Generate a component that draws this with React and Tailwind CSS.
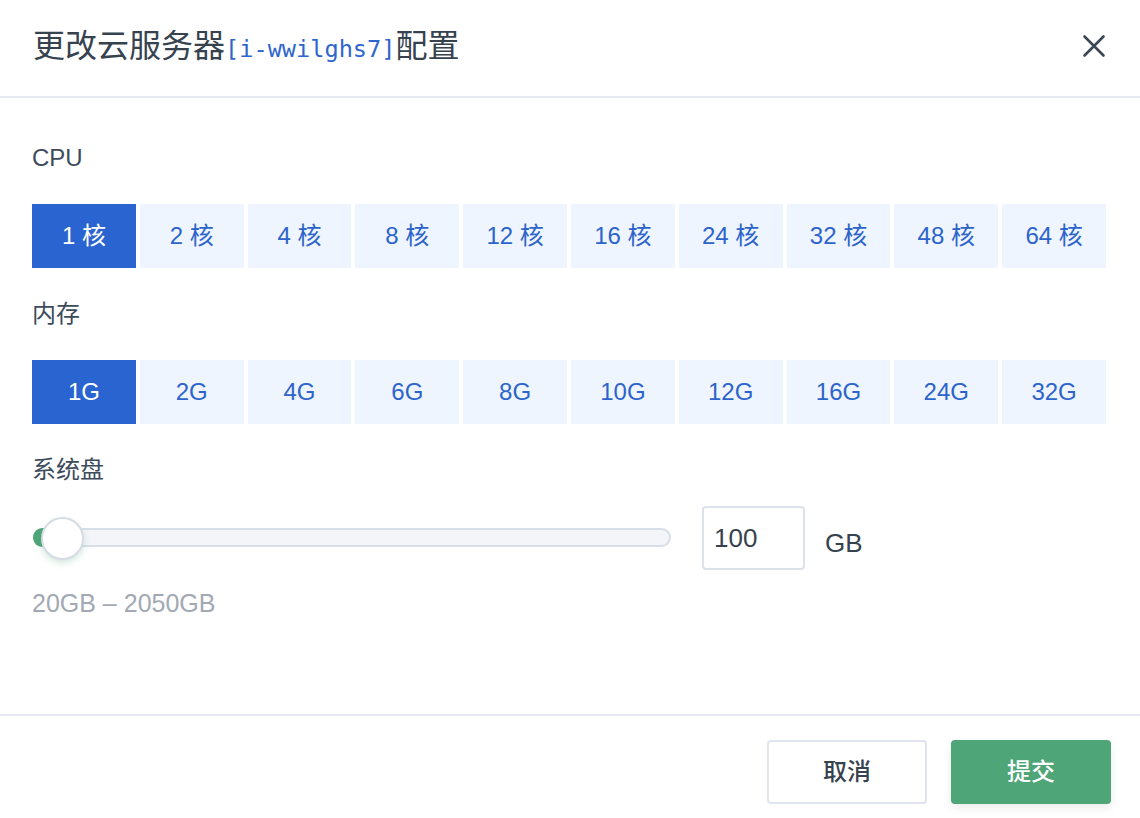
import { useState } from "react";

const cpuOptions = [1, 2, 4, 8, 12, 16, 24, 32, 48, 64];
const memOptions = ["1G", "2G", "4G", "6G", "8G", "10G", "12G", "16G", "24G", "32G"];

const font = "font-['Liberation_Sans','Noto_Sans_CJK_SC',sans-serif]";

function OptionRow({ options, value, onChange, render }) {
  return (
    <div className="flex gap-1">
      {options.map((opt) => (
        <button
          key={opt}
          type="button"
          onClick={() => onChange(opt)}
          className={`flex h-16 flex-1 items-center justify-center text-[24px] ${
            opt === value ? "bg-[#2a64d0] text-white" : "bg-[#eff5fe] text-[#2c64cb]"
          }`}
        >
          {render(opt)}
        </button>
      ))}
    </div>
  );
}

function App() {
  const [cpu, setCpu] = useState(1);
  const [mem, setMem] = useState("1G");
  const [disk, setDisk] = useState("100");

  return (
    <div className={`flex h-[818px] w-[1140px] flex-col bg-white text-[#3d4b5c] ${font}`}>
      <header className="flex h-[98px] items-center justify-between border-b-2 border-[#e6eaf0] pb-1 pl-[33px] pr-[34px]">
        <h1 className="flex items-baseline text-[32px] leading-none text-[#37424f]">
          <span>更改云服务器</span>
          <span className="font-['DejaVu_Sans_Mono',monospace] text-[23.6px] text-[#2f66cc]">[i-wwilghs7]</span>
          <span>配置</span>
        </h1>
        <button type="button" className="text-[#3a4757]">
          <svg viewBox="0 0 24 24" className="h-6 w-6" fill="none" stroke="currentColor" strokeWidth="2.6" strokeLinecap="round">
            <path d="M2.5 2.5 21.5 21.5M21.5 2.5 2.5 21.5" />
          </svg>
        </button>
      </header>

      <main className="flex-1 pl-8 pr-[34px] pt-[44px]">
        <p className="text-[24px] leading-8">CPU</p>
        <div className="mt-[30px]">
          <OptionRow options={cpuOptions} value={cpu} onChange={setCpu} render={(n) => `${n} 核`} />
        </div>

        <p className="mt-[30px] text-[24px] leading-8">内存</p>
        <div className="mt-[30px]">
          <OptionRow options={memOptions} value={mem} onChange={setMem} render={(m) => m} />
        </div>

        <p className="mt-[30px] text-[24px] leading-8">系统盘</p>
        <div className="mt-5 flex items-start">
          <div className="relative ml-px h-16 w-[638px]">
            <div className="absolute left-0 right-0 top-[22px] h-[19px] rounded-full border-2 border-[#d9dfe8] bg-[#f3f5f9]" />
            <div className="absolute left-0 top-[22px] h-[19px] w-[30px] rounded-l-full bg-[#4ea577]" />
            <div className="absolute left-[8px] top-[11px] h-[43px] w-[43px] rounded-full border-2 border-[#d6dce5] bg-white shadow-[0_3px_6px_rgba(78,165,119,0.25)]" />
          </div>
          <input
            value={disk}
            onChange={(e) => setDisk(e.target.value)}
            className="ml-[31px] h-16 w-[103px] rounded border-2 border-[#dde2ea] px-[10px] text-[26px] text-[#37424f] outline-none"
          />
          <span className="ml-5 mt-[21px] text-[26px] leading-8 text-[#37424f]">GB</span>
        </div>
        <p className="mt-[17px] text-[25px] leading-8 text-[#a2a9b4]">20GB – 2050GB</p>
      </main>

      <footer className="flex h-[104px] items-start justify-end gap-6 border-t-2 border-[#e6eaf0] pr-[29px] pt-[24px]">
        <button
          type="button"
          className="h-16 w-[160px] rounded border-2 border-[#e0e5ed] bg-white text-[24px] font-medium text-[#37424f]"
        >
          取消
        </button>
        <button
          type="button"
          className="h-16 w-[160px] rounded bg-[#4ea577] text-[24px] font-medium text-white shadow-[0_4px_10px_rgba(0,0,0,0.08)]"
        >
          提交
        </button>
      </footer>
    </div>
  );
}

export default App;
